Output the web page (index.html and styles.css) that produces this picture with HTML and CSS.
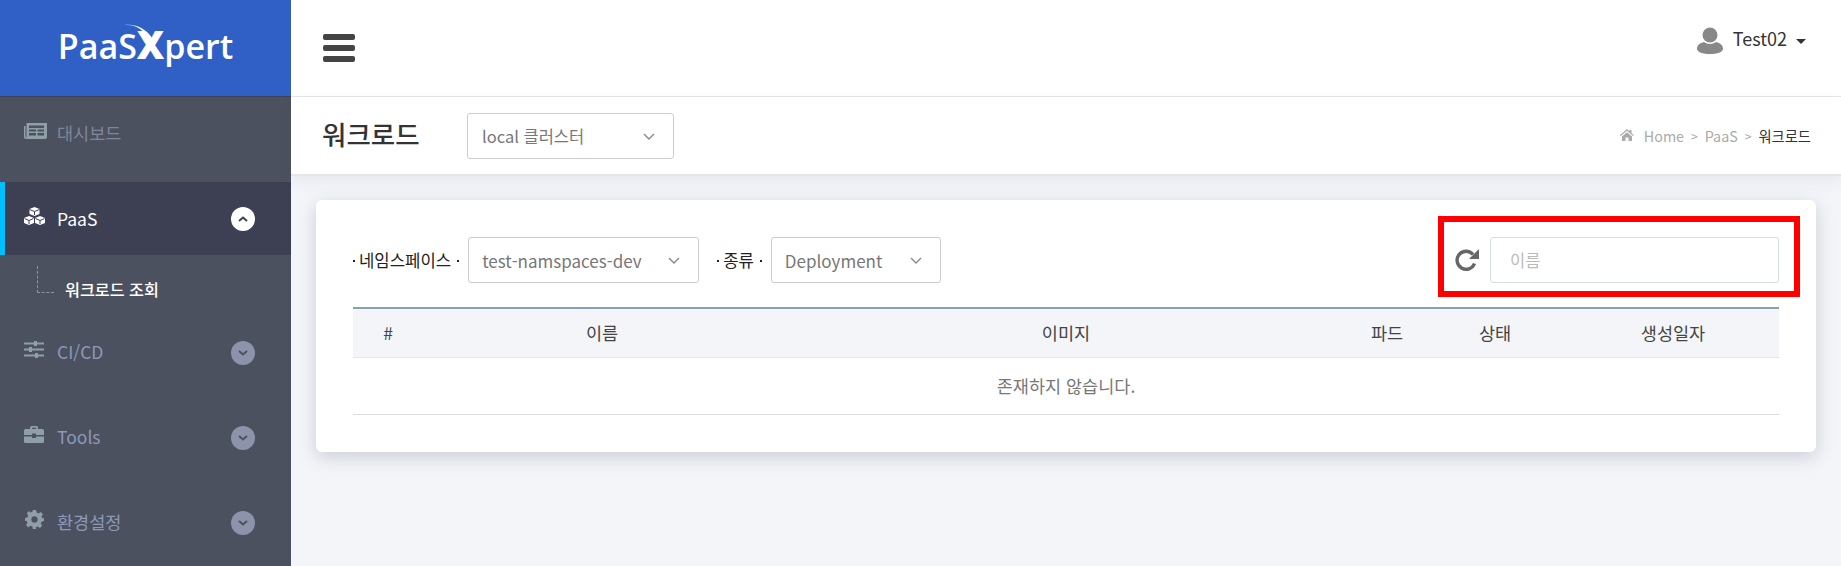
FILE: index.html
```html
<!DOCTYPE html>
<html lang="ko">
<head>
  <meta charset="utf-8">
  <title>PaaSXpert</title>
  <link rel="stylesheet" href="styles.css">
</head>
<body>
  <aside class="sidebar">
    <div class="logo">
      <span class="logo-text">PaaS<b>X</b>pert</span>
      <svg class="logo-arc" width="34" height="20" viewBox="0 0 34 20"><path d="M0 1C10 0 19 5 25 17L28 15C21 5 12 0 0 1Z" fill="#fff"/></svg>
    </div>
    <nav>
      <a class="menu-item menu-dim">
        <svg class="menu-icon" height="16" viewBox="0 0 23 16" preserveAspectRatio="xMinYMid meet"><path fill="#8e9fa8" d="M2 0h21v14a2 2 0 0 1-2 2H2a2 2 0 0 1-2-2V3h1.500v10.500q0 1 1 1V0z"/><path fill="#4c5160" d="M5 2.500h15v2.500H5zM5 6.500h7v2H5zM13.500 6.500H20v2h-6.500zM5 10h7v2.500H5zM13.500 10H20v2.500h-6.500z"/></svg>
        <span>대시보드</span>
      </a>
      <a class="menu-item menu-active">
        <svg class="menu-icon" height="18" viewBox="0 0 21 18" preserveAspectRatio="xMinYMid meet"><path fill="#fff" d="M10.500 0l5 2v5l-5 2-5-2V2zM5 9l5 2v5l-5 2-5-2v-5zM16 9l5 2v5l-5 2-5-2v-5z"/><path stroke="#3c4052" fill="none" d="M5.500 2.500l5 2 5-2M10.500 4.500V8M.5 11.500l4.500 2 4.500-2M5 13.500V17M11.500 11.500l4.500 2 4.500-2M16 13.500V17"/></svg>
        <span>PaaS</span>
        <i class="toggle toggle-open"><svg width="10" height="6" viewBox="0 0 10 6"><path d="M1 5l4-3.500L9 5" fill="none" stroke="#3c4052" stroke-width="2"/></svg></i>
      </a>
      <div class="submenu"><a class="submenu-item">워크로드 조회</a></div>
      <a class="menu-item">
        <svg class="menu-icon" height="17" viewBox="0 0 20 17" preserveAspectRatio="xMinYMid meet"><path fill="#8e9fa8" d="M0 1.500h20v2H0zM0 7.500h20v2H0zM0 13.500h20v2H0z"/><path fill="#8e9fa8" d="M10 0h3v5h-3zM5 6h3v5H5zM11 12h3v5h-3z"/></svg>
        <span>CI/CD</span>
        <i class="toggle"><svg width="10" height="6" viewBox="0 0 10 6"><path d="M1 1l4 3.500L9 1" fill="none" stroke="#4c5160" stroke-width="2"/></svg></i>
      </a>
      <a class="menu-item">
        <svg class="menu-icon" height="17" viewBox="0 0 20 17" preserveAspectRatio="xMinYMid meet"><path fill="#8e9fa8" d="M6 3V1.500A1.500 1.500 0 0 1 7.500 0h5A1.500 1.500 0 0 1 14 1.500V3h4.500A1.500 1.500 0 0 1 20 4.500V9H12V7.500H8V9H0V4.500A1.500 1.500 0 0 1 1.500 3zM8 1.800V3h4V1.800zM0 10.500h8V12h4v-1.500h8v5a1.500 1.500 0 0 1-1.500 1.500h-17A1.500 1.500 0 0 1 0 15.500z"/></svg>
        <span>Tools</span>
        <i class="toggle"><svg width="10" height="6" viewBox="0 0 10 6"><path d="M1 1l4 3.500L9 1" fill="none" stroke="#4c5160" stroke-width="2"/></svg></i>
      </a>
      <a class="menu-item">
        <svg class="menu-icon menu-icon-gear" height="19" viewBox="0 0 24 24" preserveAspectRatio="xMinYMid meet"><path fill="#8e9fa8" fill-rule="evenodd" d="M10 0h4l.7 3.300 2.300 1 2.900-1.800 2.800 2.800-1.800 2.900 1 2.300L24 10v4l-3.100.7-1 2.300 1.800 2.900-2.800 2.800-2.900-1.800-2.300 1L14 24h-4l-.7-3.100-2.300-1-2.900 1.800-2.800-2.800 1.800-2.900-1-2.300L0 14v-4l3.100-.7 1-2.300-1.800-2.900 2.800-2.800L7 3.100l2.300-1zM12 8a4 4 0 1 0 0 8 4 4 0 0 0 0-8z"/></svg>
        <span>환경설정</span>
        <i class="toggle"><svg width="10" height="6" viewBox="0 0 10 6"><path d="M1 1l4 3.500L9 1" fill="none" stroke="#4c5160" stroke-width="2"/></svg></i>
      </a>
    </nav>
  </aside>

  <div class="main">
    <header class="topbar">
      <div class="hamburger"><span></span><span></span><span></span></div>
      <div class="user">
        <svg width="26" height="27" viewBox="0 0 26 27"><circle cx="13" cy="8" r="7.500" fill="#888"/><path fill="#888" d="M0 22c0-4 3-6 7-7 3 2.500 9 2.500 12 0 4 1 7 3 7 7 0 3-6 5-13 5S0 25 0 22z"/></svg>
        <span class="user-name">Test02</span>
        <i class="caret"></i>
      </div>
    </header>

    <div class="page-head">
      <h1>워크로드</h1>
      <div class="select select-cluster">
        <span>local 클러스터</span>
        <svg class="chevron" width="12" height="7" viewBox="0 0 12 7"><path d="M1 1l5 5 5-5" fill="none" stroke="#888" stroke-width="1.400"/></svg>
      </div>
      <div class="breadcrumb">
        <svg width="14" height="12" viewBox="0 0 14 12"><path fill="#aaa" d="M7 0l2.500 2.200V1h2v3l2.500 2.200-.8.800L7 1.800.8 7 0 6.200zM2 7.500L7 3.200l5 4.300V12H8.500V8.500h-3V12H2z"/></svg>
        <span class="crumb crumb-home">Home</span>
        <span class="crumb-sep">&gt;</span>
        <span class="crumb">PaaS</span>
        <span class="crumb-sep">&gt;</span>
        <span class="crumb-current">워크로드</span>
      </div>
    </div>

    <section class="card">
      <div class="filters">
        <label class="filter-label">네임스페이스</label>
        <div class="select select-ns">
          <span>test-namspaces-dev</span>
          <svg class="chevron" width="12" height="7" viewBox="0 0 12 7"><path d="M1 1l5 5 5-5" fill="none" stroke="#888" stroke-width="1.400"/></svg>
        </div>
        <label class="filter-label filter-kind">종류</label>
        <div class="select select-kind">
          <span>Deployment</span>
          <svg class="chevron" width="12" height="7" viewBox="0 0 12 7"><path d="M1 1l5 5 5-5" fill="none" stroke="#888" stroke-width="1.400"/></svg>
        </div>
        <div class="search">
          <svg width="24" height="24" viewBox="0 0 24 24"><path fill="none" stroke="#666" stroke-width="3.400" d="M19.500 15.500A9 9 0 1 1 18 6.500"/><path fill="#666" d="M24 1v10H14z"/></svg>
          <input class="search-input" type="text" placeholder="이름">
        </div>
      </div>

      <table class="grid">
        <thead>
          <tr>
            <th class="col-no">#</th>
            <th class="col-name">이름</th>
            <th class="col-image">이미지</th>
            <th class="col-pod">파드</th>
            <th class="col-state">상태</th>
            <th>생성일자</th>
          </tr>
        </thead>
        <tbody>
          <tr><td colspan="6">존재하지 않습니다.</td></tr>
        </tbody>
      </table>

      <div class="highlight"></div>
    </section>
  </div>
</body>
</html>
```

FILE: styles.css
```css
* {
  box-sizing: border-box;
}

html, body {
  height: 100%;
}

body {
  margin: 0;
  display: flex;
  overflow: hidden;
  background-color: #f3f5f9;
  color: #333;
  font-family: "Noto Sans CJK KR", "Noto Sans", sans-serif;
  font-size: 17.500px;
}

/* sidebar */
.sidebar {
  width: 291px;
  flex-shrink: 0;
  background-color: #4c5160;
}

.logo {
  position: relative;
  height: 97px;
  display: flex;
  justify-content: center;
  padding-top: 21px;
  background-color: #3060c5;
  border-bottom: 1px solid #3d4354;
}

.logo-text {
  color: #fff;
  font-family: "Open Sans", sans-serif;
  font-size: 34px;
  font-weight: 600;
  line-height: 46px;
}

.logo-text b {
  font-size: 38px;
  font-weight: 800;
}

.logo-arc {
  position: absolute;
  left: 125px;
  top: 24px;
}

.menu-item {
  height: 73px;
  margin-bottom: 12px;
  display: flex;
  align-items: center;
  padding-left: 24px;
  color: #8d99b8;
}

.menu-item span {
  margin-top: -2px;
}

.menu-icon {
  width: 33px;
  margin-top: -6px;
  padding-right: 10px;
  flex-shrink: 0;
}

.menu-icon-gear {
  padding-left: 1px;
}

.menu-dim {
  color: #7e8798;
}

.menu-active {
  margin-bottom: 0;
  background-color: #3c4052;
  box-shadow: inset 5px 0 0 #00bfff;
  color: #fff;
}

.menu-active span {
  margin-top: -1px;
}

.toggle {
  width: 24px;
  height: 24px;
  margin-left: auto;
  margin-right: 36px;
  display: flex;
  align-items: center;
  justify-content: center;
  border-radius: 50%;
  background-color: #8d93ab;
}

.toggle-open {
  background-color: #fff;
}

.submenu {
  position: relative;
  height: 61px;
  padding: 21px 0 0 65px;
}

.submenu::before {
  content: "";
  position: absolute;
  left: 37px;
  top: 11px;
  width: 16px;
  height: 26px;
  border-left: 1px dashed #8d93ab;
  border-bottom: 1px dashed #8d93ab;
}

.submenu-item {
  color: #fff;
  font-size: 16.200px;
  font-weight: 500;
  line-height: 24px;
}

/* main */
.main {
  flex: 1;
  min-width: 0;
}

.topbar {
  height: 97px;
  display: flex;
  justify-content: space-between;
  padding: 27px 35px 0 32px;
  background-color: #fff;
  border-bottom: 1px solid #e4e6eb;
}

.hamburger {
  width: 32px;
  height: 28px;
  margin-top: 7px;
  display: flex;
  flex-direction: column;
  justify-content: space-between;
}

.hamburger span {
  height: 6px;
  border-radius: 2px;
  background-color: #444;
}

.user {
  display: flex;
  align-items: flex-start;
  height: 27px;
}

.user-name {
  margin-left: 10px;
  margin-top: -2px;
  color: #333;
  font-size: 18px;
  line-height: 26px;
}

.caret {
  margin-left: 9px;
  margin-top: 12px;
  border-top: 5px solid #333;
  border-left: 5px solid transparent;
  border-right: 5px solid transparent;
}

.page-head {
  height: 79px;
  display: flex;
  align-items: center;
  padding: 0 30px 1px 31px;
  background-color: #fff;
  border-bottom: 2px solid #e4e6eb;
  box-shadow: 0 6px 14px rgba(60, 70, 90, 0.07);
}

h1 {
  width: 145px;
  margin: 0 0 2px;
  color: #333;
  font-size: 26.500px;
  font-weight: 500;
  line-height: 36px;
}

.select {
  height: 46px;
  display: flex;
  align-items: center;
  justify-content: space-between;
  background-color: #fff;
  border: 1px solid #ccc;
  border-radius: 3px;
  color: #777;
  font-size: 17px;
}

.select-cluster {
  width: 207px;
  margin-top: 2px;
  padding: 0 18px 0 14px;
  font-size: 16.500px;
}

.select-ns {
  width: 231px;
  padding: 0 18px 0 13px;
}

.select-kind {
  width: 170px;
  padding: 0 18px 0 13px;
}

.breadcrumb {
  margin-left: auto;
  display: flex;
  align-items: center;
  font-size: 14.300px;
}

.crumb {
  color: #aaa;
}

.crumb-home {
  margin-left: 10px;
}

.crumb-sep {
  margin: 0 7px;
  color: #aaa;
  font-size: 12px;
}

.crumb-current {
  color: #333;
}

/* card */
.card {
  position: relative;
  margin: 24px 25px 0;
  padding: 37px;
  background-color: #fff;
  border-radius: 6px;
  box-shadow: 0 5px 18px rgba(60, 70, 90, 0.22);
}

.filters {
  display: flex;
  align-items: center;
  margin-bottom: 24px;
}

.filter-label {
  margin-right: 9px;
  padding: 0 8px 0 6px;
  position: relative;
  color: #222;
  font-size: 16.700px;
}

.filter-label::before,
.filter-label::after {
  content: "";
  position: absolute;
  top: 50%;
  width: 2px;
  height: 2px;
  background-color: #222;
}

.filter-label::before {
  left: 0;
}

.filter-label::after {
  right: 0;
}

.filter-kind {
  margin-left: 18px;
}

.search {
  margin-left: auto;
  display: flex;
  align-items: center;
  gap: 11px;
}

.search-input {
  width: 289px;
  height: 46px;
  padding: 0 19px;
  border: 1px solid #d6dee8;
  border-radius: 3px;
  font-family: inherit;
  font-size: 16.500px;
}

.search-input::placeholder {
  color: #bbb;
}

.grid {
  width: 100%;
  table-layout: fixed;
  border-collapse: collapse;
  border-top: 2px solid #8aa0ae;
  border-bottom: 1px solid #ddd;
}

.grid th {
  height: 49px;
  background-color: #f3f5f9;
  border-bottom: 1px solid #e4e6eb;
  color: #444;
  font-weight: 400;
}

.grid td {
  height: 57px;
  color: #777;
  text-align: center;
}

.col-no { width: 70px; }
.col-name { width: 358px; }
.col-image { width: 570px; }
.col-pod { width: 72px; }
.col-state { width: 144px; }

/* red annotation around the search box */
.highlight {
  position: absolute;
  left: 1122px;
  top: 16px;
  width: 362px;
  height: 81px;
  border: 6px solid #f00;
}
```
